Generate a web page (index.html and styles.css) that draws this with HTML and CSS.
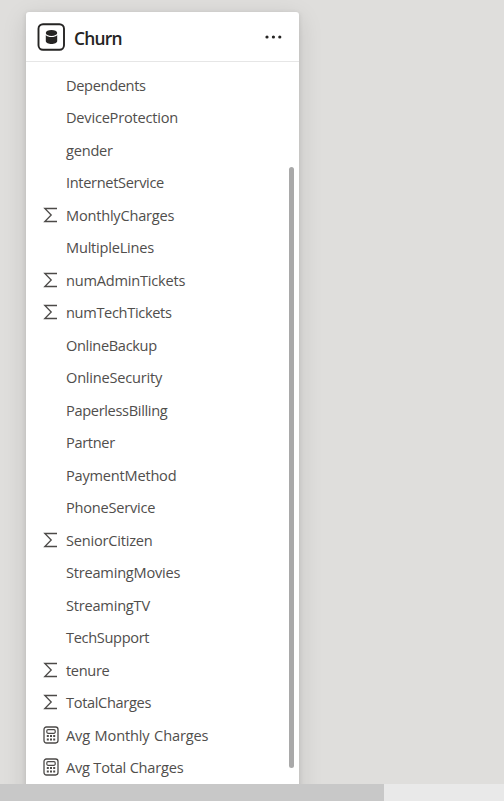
FILE: index.html
```
<!DOCTYPE html>
<html lang="en">
<head>
<meta charset="utf-8">
<title>Churn</title>
<link rel="stylesheet" href="styles.css">
</head>
<body>
<svg class="defs" aria-hidden="true">
  <symbol id="sum" viewBox="0 0 16 16"><path d="M14 1.5H1.8L8.2 8L1.8 14.5H14" fill="none" stroke="currentColor" stroke-width="1.3"/></symbol>
  <symbol id="calc" viewBox="0 0 16 18"><rect x="1" y="1" width="14" height="16" rx="2.4" fill="none" stroke="currentColor" stroke-width="1.3"/><rect x="3.8" y="3.7" width="8.4" height="3.6" rx="1.2" fill="none" stroke="currentColor" stroke-width="1.2"/><path d="M4.8 9v2M8 9v2M11.2 9v2M4.8 12.6v2M8 12.6v2M11.2 12.6v2" stroke="currentColor" stroke-width="2"/></symbol>
</svg>
<div class="canvas">
  <section class="card">
    <header class="head">
      <svg class="table-icon" viewBox="0 0 28 28"><rect x="1.5" y="1.2" width="25.5" height="25.6" rx="4.5" fill="#fff" stroke="#252423" stroke-width="1.9"/><ellipse cx="14.5" cy="9.9" rx="5.7" ry="3" fill="#252423"/><path d="M8.8 12C10.6 14.7 18.4 14.7 20.2 12V18C20.2 22 8.8 22 8.8 18Z" fill="#252423"/></svg>
      <h1 class="title">Churn</h1>
      <svg class="more" viewBox="0 0 18 4"><circle cx="2" cy="2" r="1.6"/><circle cx="8.4" cy="2" r="1.6"/><circle cx="14.8" cy="2" r="1.6"/></svg>
    </header>
    <div class="body">
      <ul class="fields">
        <li class="field"><span class="tight">Dependents</span></li>
        <li class="field"><span>DeviceProtection</span></li>
        <li class="field"><span>gender</span></li>
        <li class="field"><span class="tight">InternetService</span></li>
        <li class="field"><svg class="icon"><use href="#sum"/></svg><span>MonthlyCharges</span></li>
        <li class="field"><span>MultipleLines</span></li>
        <li class="field"><svg class="icon"><use href="#sum"/></svg><span>numAdminTickets</span></li>
        <li class="field"><svg class="icon"><use href="#sum"/></svg><span class="tight">numTechTickets</span></li>
        <li class="field"><span class="tight">OnlineBackup</span></li>
        <li class="field"><span>OnlineSecurity</span></li>
        <li class="field"><span class="tight">PaperlessBilling</span></li>
        <li class="field"><span class="tight">Partner</span></li>
        <li class="field"><span>PaymentMethod</span></li>
        <li class="field"><span>PhoneService</span></li>
        <li class="field"><svg class="icon"><use href="#sum"/></svg><span>SeniorCitizen</span></li>
        <li class="field"><span>StreamingMovies</span></li>
        <li class="field"><span>StreamingTV</span></li>
        <li class="field"><span class="tight">TechSupport</span></li>
        <li class="field"><svg class="icon"><use href="#sum"/></svg><span class="tight">tenure</span></li>
        <li class="field"><svg class="icon"><use href="#sum"/></svg><span class="tight">TotalCharges</span></li>
        <li class="field"><svg class="icon calc"><use href="#calc"/></svg><span class="measure">Avg Monthly Charges</span></li>
        <li class="field"><svg class="icon calc"><use href="#calc"/></svg><span>Avg Total Charges</span></li>
      </ul>
      <div class="scrollbar"></div>
    </div>
  </section>
</div>
<div class="hscroll"><div class="hthumb"></div></div>
</body>
</html>
```
FILE: styles.css
```
* { box-sizing: border-box; }
body {
  margin: 0;
  height: 801px;
  display: flex;
  flex-direction: column;
  overflow: hidden;
  background: #dfdedc;
  font-family: "Open Sans", "Noto Sans", sans-serif;
}
.defs { position: absolute; width: 0; height: 0; }
.canvas {
  height: 784px;
  padding: 12px 0 0 26px;
  overflow: hidden;
}
.card {
  width: 273px;
  height: 800px;
  background: #fff;
  border-radius: 3px;
  box-shadow: 0 6px 24px rgba(0, 0, 0, 0.13), 0 1px 5px rgba(0, 0, 0, 0.11);
}
.head {
  display: flex;
  align-items: center;
  height: 50px;
  padding: 0 16px 0 11px;
  border-bottom: 1px solid #e6e6e6;
}
.table-icon { width: 28px; height: 28px; }
.title {
  flex: 1;
  margin: 0 0 0 9px;
  padding-top: 2px;
  font-size: 17.4px;
  line-height: 24px;
  font-weight: 600;
  letter-spacing: -0.75px;
  color: #252423;
}
.more { width: 18px; height: 4px; margin-top: 1px; fill: #252423; }
.body {
  display: flex;
  justify-content: space-between;
  padding: 6.6px 5px 0 17px;
}
.fields { margin: 0; padding: 0; list-style: none; }
.field {
  display: grid;
  grid-template-columns: 23px auto;
  align-items: center;
  height: 32.49px;
  font-size: 14.6px;
  line-height: 20px;
  letter-spacing: -0.22px;
  color: #504e4c;
  white-space: nowrap;
}
.field span { grid-column: 2; }
.field .tight { letter-spacing: -0.34px; }
.field .measure { letter-spacing: -0.16px; word-spacing: 1px; }
.icon { width: 16px; height: 16px; color: #4c4a48; }
.calc { width: 18px; height: 18px; margin-left: -1px; }
.scrollbar {
  width: 5px;
  height: 601px;
  margin-top: 98.4px;
  border-radius: 2.5px;
  background: #a9a9a9;
}
.hscroll { height: 17px; background: #e9e9e9; }
.hthumb { width: 384px; height: 17px; background: #c8c8c8; }
```
